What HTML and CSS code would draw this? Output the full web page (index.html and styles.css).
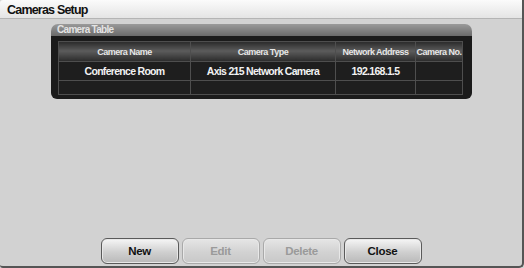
FILE: index.html
```html
<!DOCTYPE html>
<html lang="en">
<head>
  <meta charset="UTF-8">
  <title>Cameras Setup</title>
  <link rel="stylesheet" href="styles.css">
</head>
<body>
  <div class="window">
    <div class="title-bar">Cameras Setup</div>
    <div class="panel">
      <div class="panel-head">Camera Table</div>
      <div class="panel-body">
        <table class="cam-table">
          <thead>
            <tr>
              <th class="col-name">Camera Name</th>
              <th class="col-type">Camera Type</th>
              <th class="col-addr">Network Address</th>
              <th class="col-no">Camera No.</th>
            </tr>
          </thead>
          <tbody>
            <tr class="row">
              <td>Conference Room</td>
              <td>Axis 215 Network Camera</td>
              <td>192.168.1.5</td>
              <td></td>
            </tr>
            <tr class="row empty">
              <td></td><td></td><td></td><td></td>
            </tr>
          </tbody>
        </table>
      </div>
    </div>
    <div class="buttons">
      <button class="btn">New</button>
      <button class="btn" disabled>Edit</button>
      <button class="btn" disabled>Delete</button>
      <button class="btn">Close</button>
    </div>
  </div>
</body>
</html>
```

FILE: styles.css
```css
html, body {
  margin: 0;
  padding: 0;
  background: #d3d3d3;
}
/* окно целиком */
.window {
  box-sizing: border-box;
  width: 524px;
  height: 268px;
  display: flex;
  flex-direction: column;
  background: #d2d2d2;
  border-right: 2px solid #555;
  border-bottom: 2px solid #555;
  border-radius: 3px 0 5px 3px;
  font-family: "Liberation Sans", Arial, sans-serif;
  overflow: hidden;
}
.title-bar {
  height: 18px;
  line-height: 20px;
  padding-left: 7px;
  font-size: 12.5px;
  letter-spacing: -0.8px;
  font-weight: bold;
  color: #111;
  background: linear-gradient(#fbfbfb, #e4e4e4);
  border-bottom: 1px solid #b4b4b4;
}
/* панель с таблицей */
.panel {
  width: 421px;
  margin: 5px 0 0 51px;
}
.panel-head {
  height: 12px;
  line-height: 12px;
  padding-left: 6px;
  font-size: 10px;
  letter-spacing: -0.7px;
  font-weight: bold;
  color: #e4e4e4;
  background: linear-gradient(#9a9a9a, #6a6a6a);
  border-radius: 7px 7px 0 0;
}
.panel-body {
  background: #1b1b1b;
  padding: 5px 9px 4px 7px;
  border-radius: 0 0 6px 6px;
}
.cam-table {
  width: 405px;
  border-collapse: collapse;
  table-layout: fixed;
  color: #f2f2f2;
  font-weight: bold;
  white-space: nowrap;
}
.cam-table th,
.cam-table td {
  border: 1px solid #4e4e4e;
  padding: 0;
  text-align: center;
  overflow: hidden;
}
.cam-table th {
  height: 19px;
  font-size: 9px;
  letter-spacing: -0.5px;
  color: #e6e6e6;
  background: linear-gradient(#2e2e2e, #5c5c5c 45%, #2a2a2a);
}
.col-name { width: 131px; }
.col-type { width: 144px; }
.col-addr { width: 79px; }
.row td {
  height: 18px;
  font-size: 10.5px;
  letter-spacing: -0.7px;
  background: #1e1e1e;
}
.row.empty td {
  height: 13px;
}
/* кнопки внизу */
.buttons {
  margin-top: auto;
  padding-bottom: 2px;
  display: flex;
  justify-content: center;
  gap: 3px;
}
.btn {
  width: 78px;
  height: 26px;
  padding: 0;
  font-family: inherit;
  font-size: 11.5px;
  letter-spacing: -0.3px;
  font-weight: bold;
  color: #111;
  background: linear-gradient(#f6f6f6, #cfcfcf 55%, #b9b9b9);
  border: 1px solid #5a5a5a;
  border-radius: 6px;
  box-shadow: inset 0 0 0 1px #e8e8e8;
}
.btn:disabled {
  color: #9a9a9a;
  border-color: #a9a9a9;
  background: linear-gradient(#e6e6e6, #d2d2d2 55%, #c8c8c8);
}
```
